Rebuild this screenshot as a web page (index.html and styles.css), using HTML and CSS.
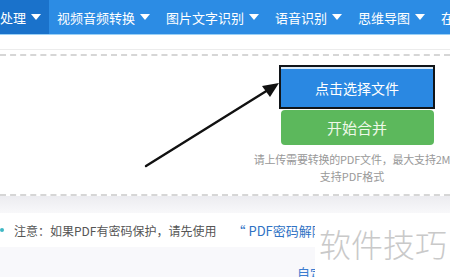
FILE: index.html
```html
<!DOCTYPE html>
<html>
<head>
    <title>PDF合并</title>
    <meta name="viewport" content="width=device-width, initial-scale=1.0">
    <link rel="stylesheet" href="styles.css">
</head>
<body>
    <div class="page">
        <div class="nav">
            <div class="nav-item active">处理 <span class="caret"></span></div>
            <div class="nav-item">视频音频转换 <span class="caret"></span></div>
            <div class="nav-item">图片文字识别 <span class="caret"></span></div>
            <div class="nav-item">语音识别 <span class="caret"></span></div>
            <div class="nav-item">思维导图 <span class="caret"></span></div>
            <div class="nav-item">在线转换 <span class="caret"></span></div>
        </div>

        <div class="content">
            <div class="upload-wrap">
                <div class="upload-box">
                    <div class="upload-col">
                        <button class="button button-pick">点击选择文件</button>
                        <button class="button button-merge">开始合并</button>
                        <div class="upload-tip tip-first">请上传需要转换的PDF文件，最大支持2M</div>
                        <div class="upload-tip">支持PDF格式</div>
                    </div>
                </div>
            </div>
            <div class="shade"></div>
            <div class="note">
                <span class="dot"></span>
                <span class="note-text">注意：如果PDF有密码保护，请先使用</span>
                <span class="note-link">“ PDF密码解除”</span>
            </div>
            <div class="bottom">
                <span class="bottom-link">自定义设置</span>
            </div>
        </div>

        <!-- annotation arrow pointing at the pick button -->
        <svg class="arrow" width="450" height="277" viewBox="0 0 450 277">
            <line x1="146" y1="166" x2="268" y2="90" stroke="#111" stroke-width="2.4" stroke-linecap="round"/>
            <polygon points="279,83 262,86 270,97" fill="#111"/>
        </svg>

        <div class="watermark">软件技巧</div>
    </div>
</body>
</html>
```

FILE: styles.css
```css
body {
    margin: 0;
    font-family: "Noto Sans CJK SC", "Liberation Sans", sans-serif;
    background-color: #fbfbfd;
}
.page {
    position: relative;
    width: 450px;
    height: 277px;
    overflow: hidden;
}
.nav {
    display: flex;
    height: 34px;
    background-color: #2c8ce4;
    border-bottom: 1px solid #9ad0f6;
    white-space: nowrap;
}
.nav-item {
    display: flex;
    align-items: center;
    padding: 0 8px;
    color: #ffffff;
    font-size: 13px;
    flex-shrink: 0;
}
.nav-item.active {
    padding-left: 0;
    background-color: #1a72cb;
}
.caret {
    display: inline-block;
    margin-left: 5px;
    width: 0;
    height: 0;
    border-left: 5px solid transparent;
    border-right: 5px solid transparent;
    border-top: 6px solid #ffffff;
}
.content {
    background-color: #ffffff;
    padding-top: 14px;
}
.upload-wrap {
    border-top: 1px solid #ececec;
    padding-top: 4px;
}
.upload-box {
    border-top: 2px dashed #d6d6d6;
    border-bottom: 2px dashed #d6d6d6;
    padding: 9px 0;
}
.upload-col {
    display: flex;
    flex-direction: column;
    align-items: center;
    margin-left: 279px;
    width: 156px;
}
.button {
    border: none;
    color: #ffffff;
    font-family: inherit;
    width: 156px;
    cursor: pointer;
    padding: 0;
}
.button-pick {
    height: 44px;
    background-color: #2a88e2;
    border: 2px solid #101418;
    box-shadow: inset 0 2px 0 #d8e8f6;
    font-size: 14px;
    padding-top: 2px;
}
.button-merge {
    margin-top: 1px;
    height: 35px;
    width: 153px;
    background-color: #5cb85c;
    border-radius: 4px;
    font-size: 15px;
    color: #eef9e8;
}
.upload-tip {
    white-space: nowrap;
    font-size: 11px;
    color: #999999;
    line-height: 17px;
    margin-right: 10px;
}
.tip-first {
    margin-top: 6px;
    letter-spacing: -0.2px;
}
.shade {
    height: 17px;
    background: linear-gradient(#ececf0, #f8f8fa);
}
.note {
    display: flex;
    align-items: center;
    height: 34px;
    background-color: #ffffff;
    white-space: nowrap;
}
.dot {
    width: 4px;
    height: 4px;
    border-radius: 2px;
    background-color: #3fb8c4;
    margin: 0 10px 0 0;
}
.note-text {
    font-size: 12px;
    color: #555555;
}
.note-link {
    margin-left: 16px;
    font-size: 13px;
    color: #2f72c4;
}
.bottom {
    height: 40px;
    background-color: #f8f8fb;
    padding-left: 297px;
    padding-top: 12px;
    box-sizing: border-box;
}
.bottom-link {
    font-size: 13px;
    color: #3b7cd0;
    white-space: nowrap;
}
.arrow {
    position: absolute;
    left: 0;
    top: 0;
    pointer-events: none;
}
.watermark {
    position: absolute;
    left: 315px;
    top: 213px;
    width: 135px;
    height: 64px;
    background-color: #ffffff;
    color: #c9c9c9;
    font-size: 32px;
    font-weight: 300;
    line-height: 60px;
    padding-left: 4px;
    white-space: nowrap;
}
```
